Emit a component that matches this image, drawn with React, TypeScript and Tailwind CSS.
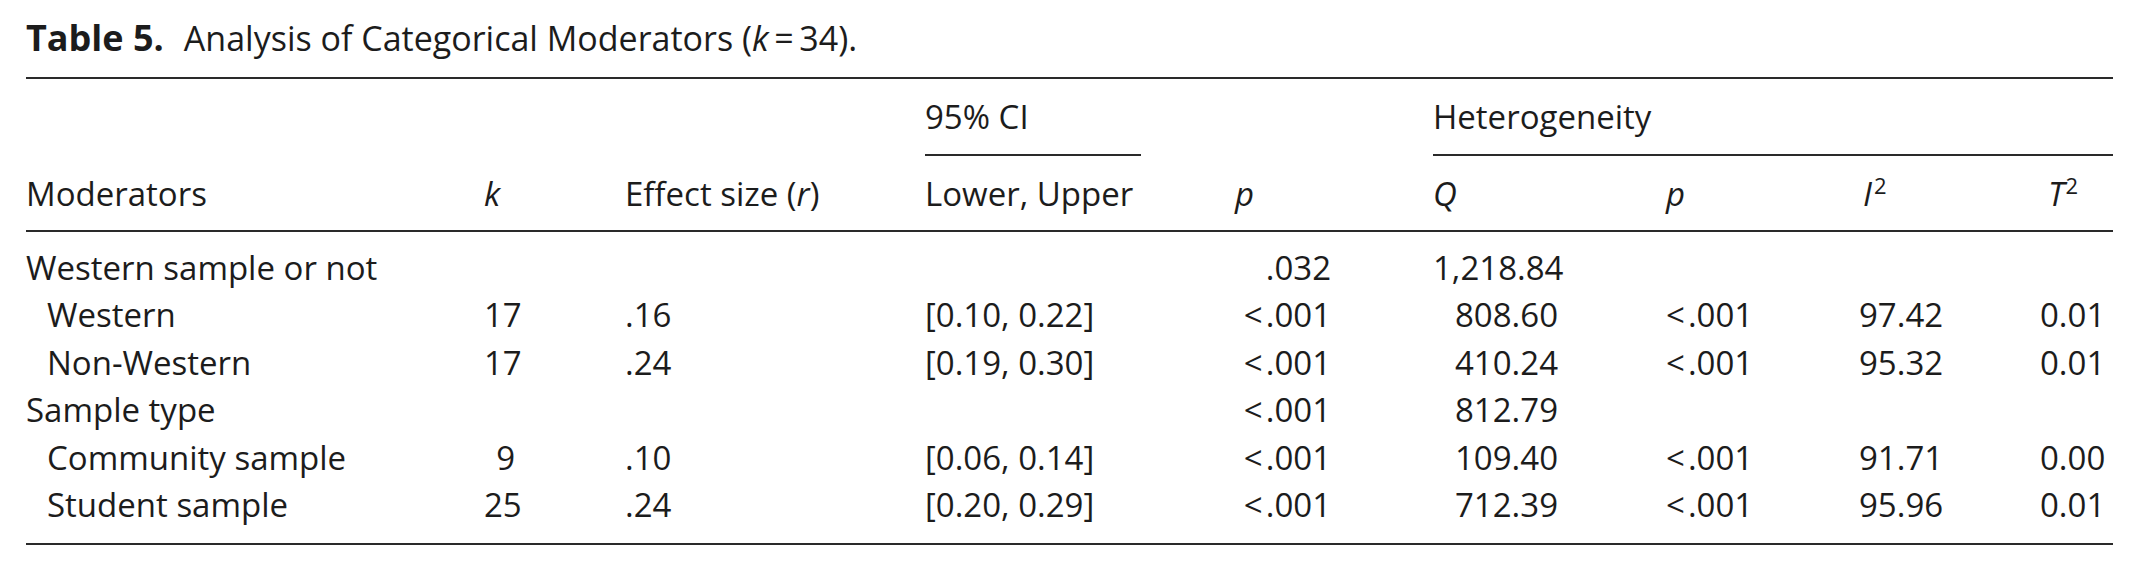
import * as React from 'react'

type Row = {
  label: string
  sub?: boolean
  k?: string
  r?: string
  ci?: string
  p?: string
  q?: string
  hp?: string
  i2?: string
  t2?: string
}

const rows: Row[] = [
  { label: 'Western sample or not', p: '.032', q: '1,218.84' },
  { label: 'Western', sub: true, k: '17', r: '.16', ci: '[0.10, 0.22]', p: '<.001', q: '808.60', hp: '<.001', i2: '97.42', t2: '0.01' },
  { label: 'Non-Western', sub: true, k: '17', r: '.24', ci: '[0.19, 0.30]', p: '<.001', q: '410.24', hp: '<.001', i2: '95.32', t2: '0.01' },
  { label: 'Sample type', p: '<.001', q: '812.79' },
  { label: 'Community sample', sub: true, k: '9', r: '.10', ci: '[0.06, 0.14]', p: '<.001', q: '109.40', hp: '<.001', i2: '91.71', t2: '0.00' },
  { label: 'Student sample', sub: true, k: '25', r: '.24', ci: '[0.20, 0.29]', p: '<.001', q: '712.39', hp: '<.001', i2: '95.96', t2: '0.01' },
]

// column tracks measured off the reference: Moderators | k | r | CI | p | Q | p | I2 | T2
const cols = 'grid grid-cols-[458px_141px_300px_310px_198px_233px_193px_181px_73px]'

// "<.001" gets a little air after the sign, like the typeset original
function Num({ v }: { v?: string }) {
  if (!v) return null
  if (v.startsWith('<')) {
    return (
      <>
        <span className="pr-[3px]">&lt;</span>
        {v.slice(1)}
      </>
    )
  }
  return <>{v}</>
}

function Rule() {
  return <div className="h-[2px] bg-[#2a2a2a]" />
}

export default function App() {
  return (
    <div className="bg-white text-[#1c1c1c] font-['Open_Sans','Noto_Sans',sans-serif] w-[2139px] h-[571px] overflow-hidden">
      <div className="px-[26px] w-[2139px]">
        {/* caption */}
        <div className="pt-[13px] text-[36px] leading-[49px] whitespace-nowrap">
          <span className="font-bold">Table 5.</span>
          <span className="ml-[20px] text-[34px]">
            Analysis of Categorical Moderators (<i>k</i>{'\u2009=\u2009'}34).
          </span>
        </div>

        <div className="w-[2087px] mt-[14px]">
          <Rule />

          <div className="text-[33px]">
            {/* spanner row */}
            <div className={`${cols} pt-[15px] leading-[46px]`}>
              <div className="col-start-4">
                <div>95% CI</div>
                <div className="mt-[14px] w-[216px] h-[2px] bg-[#2a2a2a]" />
              </div>
              <div className="col-start-6 col-span-4">
                <div>Heterogeneity</div>
                <div className="mt-[14px] h-[2px] bg-[#2a2a2a]" />
              </div>
            </div>

            {/* column heads */}
            <div className={`${cols} pt-[14px] pb-[13px] leading-[47px]`}>
              <div>Moderators</div>
              <div><i>k</i></div>
              <div>Effect size (<i>r</i>)</div>
              <div>Lower, Upper</div>
              <div><i>p</i></div>
              <div><i>Q</i></div>
              <div><i>p</i></div>
              <div className="pl-[4px]">
                <i>I</i><sup className="text-[22px] ml-[2px] -top-[0.55em]">2</sup>
              </div>
              <div className="pl-[8px]">
                <i>T</i><sup className="text-[22px] ml-[1px] -top-[0.55em]">2</sup>
              </div>
            </div>

            <Rule />

            {/* body */}
            <div className="pt-[12px] pb-[15px]">
              {rows.map((row) => (
                <div key={row.label} className={`${cols} leading-[47.4px] whitespace-nowrap`}>
                  <div className={row.sub ? 'pl-[21px]' : ''}>{row.label}</div>
                  <div><div className="w-[31px] text-right">{row.k}</div></div>
                  <div>{row.r}</div>
                  <div>{row.ci}</div>
                  <div><div className="w-[96px] text-right"><Num v={row.p} /></div></div>
                  <div><div className="w-[125px] text-right">{row.q}</div></div>
                  <div><Num v={row.hp} /></div>
                  <div>{row.i2}</div>
                  <div><div className="w-[64px] text-right">{row.t2}</div></div>
                </div>
              ))}
            </div>

            <Rule />
          </div>
        </div>
      </div>
    </div>
  )
}
